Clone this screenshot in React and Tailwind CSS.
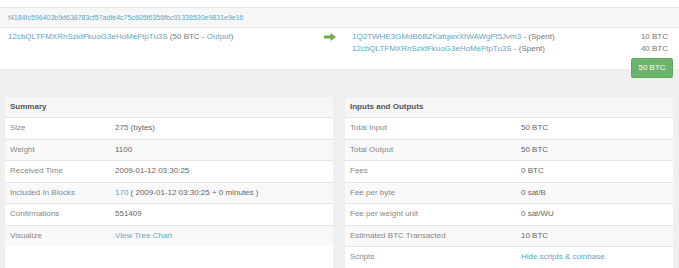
const summary = [
  ['Size', '275 (bytes)'],
  ['Weight', '1100'],
  ['Received Time', '2009-01-12 03:30:25'],
  ['Included In Blocks', 'block'],
  ['Confirmations', '551409'],
  ['Visualize', 'chart'],
];

const io = [
  ['Total Input', '50 BTC'],
  ['Total Output', '50 BTC'],
  ['Fees', '0 BTC'],
  ['Fee per byte', '0 sat/B'],
  ['Fee per weight unit', '0 sat/WU'],
  ['Estimated BTC Transacted', '10 BTC'],
  ['Scripts', 'scripts'],
];

const link = 'text-[#5aa8c8]';

const Arrow = () => (
  <svg width="12" height="8" viewBox="0 0 12 8" className="block">
    <path d="M0 2.5h6.5V0L12 4 6.5 8V5.5H0z" fill="#6aab4e" />
  </svg>
);

const renderValue = (v) => {
  if (v === 'block')
    return (
      <span>
        <span className={link}>170</span> ( 2009-01-12 03:30:25 + 0 minutes )
      </span>
    );
  if (v === 'chart') return <span className={link}>View Tree Chart</span>;
  if (v === 'scripts') return <span className={link}>Hide scripts &amp; coinbase</span>;
  return v;
};

const Table = ({ title, rows, valueCol }) => (
  <div className="w-[328px] bg-white">
    <div className="h-[20px] flex items-center px-[5px] bg-[#f6f6f6] font-bold text-[#555]">{title}</div>
    {rows.map(([label, value], i) => (
      <div
        key={label}
        className={`h-[21.5px] flex items-center border-t border-[#e4e4e4] px-[5px] ${i % 2 === 1 ? 'bg-[#f9f9f9]' : 'bg-white'}`}
      >
        <span className={`${valueCol} text-[#888] shrink-0`}>{label}</span>
        <span className="text-[#666]">{renderValue(value)}</span>
      </div>
    ))}
  </div>
);

export default function App() {
  return (
    <div className="w-[679px] h-[268px] overflow-hidden bg-[#efefef] text-[8px] leading-[12px] font-['Liberation_Sans',Arial,sans-serif]">
      <div className="bg-white pt-[7px] h-[69px]">
        <div className="h-[21px] flex items-center border-y border-[#e6e6e6] bg-[#f7f7f7] px-[8px] text-[7px]">
          <span className={link}>f4184fc596403b9d638783cf57adfe4c75c605f6356fbc91338530e9831e9e16</span>
        </div>
        <div className="flex pt-[3px] pl-[8px] pr-[11px]">
          <div className="w-[316px] text-[#777]">
            <span className={link}>12cbQLTFMXRnSzktFkuoG3eHoMeFtpTu3S</span> (50 BTC - <span className={link}>Output</span>)
          </div>
          <div className="w-[28px] pt-[2px]">
            <Arrow />
          </div>
          <div className="flex-1">
            <div className="flex justify-between text-[#777]">
              <span>
                <span className={link}>1Q2TWHE3GMdB6BZKafqwxXtWAWgFt5Jvm3</span> - (Spent)
              </span>
              <span>10 BTC</span>
            </div>
            <div className="flex justify-between text-[#777]">
              <span>
                <span className={link}>12cbQLTFMXRnSzktFkuoG3eHoMeFtpTu3S</span> - (Spent)
              </span>
              <span>40 BTC</span>
            </div>
          </div>
        </div>
        <div className="flex justify-end pr-[6px] mt-[3px] relative">
          <div className="w-[42px] h-[20px] rounded-[2px] bg-[#6cb36c] border border-[#62a862] text-white flex items-center justify-center">
            50 BTC
          </div>
        </div>
      </div>
      <div className="flex gap-[12px] pl-[5px] pt-[28px]">
        <Table title="Summary" rows={summary} valueCol="w-[105px]" />
        <Table title="Inputs and Outputs" rows={io} valueCol="w-[171px]" />
      </div>
    </div>
  );
}
